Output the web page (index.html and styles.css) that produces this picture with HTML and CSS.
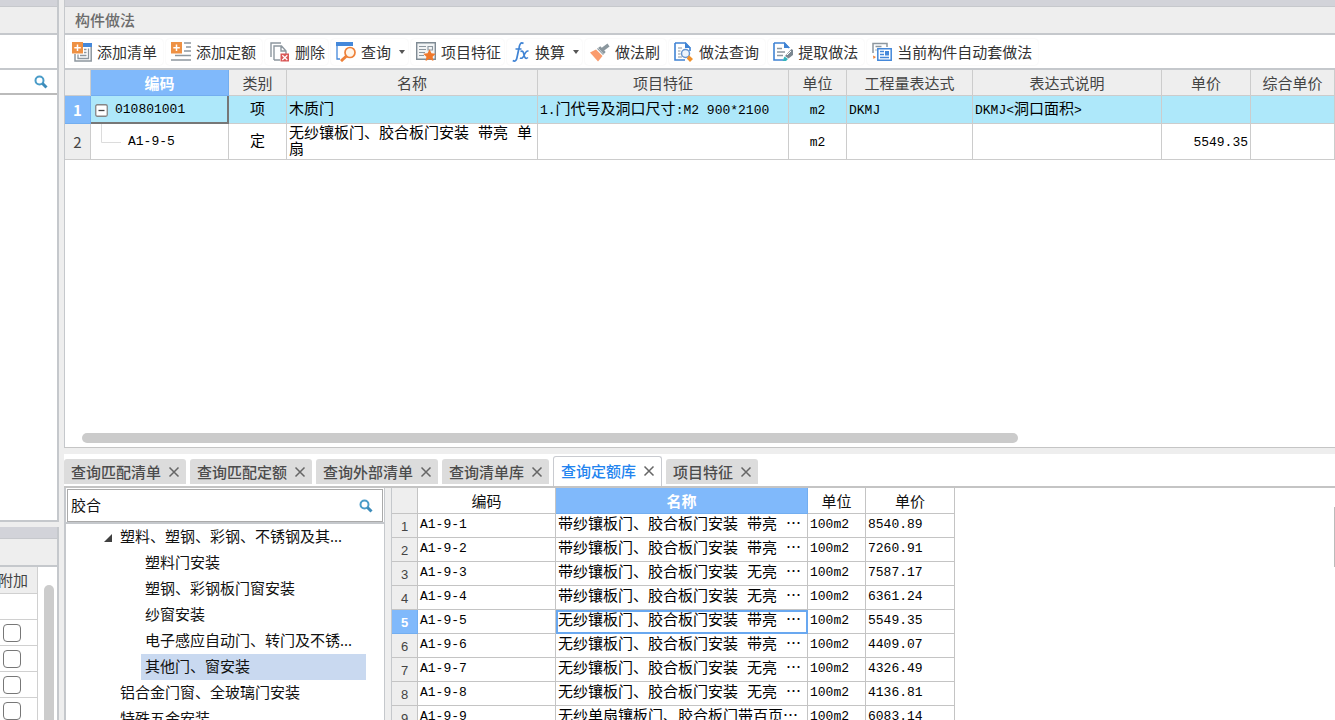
FILE: index.html
```html
<!DOCTYPE html>
<html lang="zh-CN">
<head>
<meta charset="utf-8">
<title>构件做法</title>
<link rel="stylesheet" href="styles.css">
</head>
<body>
<div class="app">
  <aside class="side">
    <section class="side-top">
      <div class="band"></div>
      <div class="caption"></div>
      <div class="side-tools"></div>
      <div class="side-search">
        <button class="icon-button" aria-label="搜索"><svg width="14" height="14" viewBox="0 0 14 14"><circle cx="5.5" cy="5.5" r="4" fill="none" stroke="#4a9cc8" stroke-width="2"/><path d="M8.5 8.5l4 4" stroke="#3d8cba" stroke-width="3"/></svg></button>
      </div>
      <div class="side-list"></div>
    </section>
    <section class="side-bottom">
      <div class="band tall"></div>
      <div class="caption"></div>
      <div class="extra">
        <table class="extra-table">
          <thead><tr><th>附加</th></tr></thead>
          <tbody>
            <tr><td></td></tr>
            <tr><td><input type="checkbox" aria-label="附加 1"></td></tr>
            <tr><td><input type="checkbox" aria-label="附加 2"></td></tr>
            <tr><td><input type="checkbox" aria-label="附加 3"></td></tr>
            <tr><td><input type="checkbox" aria-label="附加 4"></td></tr>
          </tbody>
        </table>
        <div class="side-thumb"></div>
      </div>
    </section>
  </aside>

  <main class="main">
    <section class="work">
      <div class="band"></div>
      <h1 class="caption title">构件做法</h1>
      <div class="toolbar">
        <button class="tool"><svg width="20" height="20" viewBox="0 0 20 20"><path d="M9 1h11v4H9z" fill="#4488da"/><path d="M19.200 5v14H3V12" fill="none" stroke="#8d979f" stroke-width="1.500"/><path d="M16.500 6.500v10H6v-4M12 7.500h2.500M12 10.500h2.500M8 13.500h6.500" fill="none" stroke="#8d979f" stroke-width="1.300"/><path d="M0 0h11v11.500H0z" fill="#ee9144"/><path d="M5.500 2.500v6.500M2.300 5.700h6.500" stroke="#fff" stroke-width="1.500"/></svg><span>添加清单</span></button>
        <button class="tool"><svg width="20" height="20" viewBox="0 0 20 20"><path d="M13 1h7M15 5h5M13 9h7M4 13.500h16M0 18h20" stroke="#8d979f" stroke-width="1.500"/><path d="M0 0h11v11.500H0z" fill="#ee9144"/><path d="M5.500 2.500v6.500M2.300 5.700h6.500" stroke="#fff" stroke-width="1.500"/></svg><span>添加定额</span></button>
        <button class="tool tight"><svg width="20" height="20" viewBox="0 0 20 20"><path d="M1 15V1h10M4 18V4h7.500l4.500 5v4M4 18h6M11 4v5h5" fill="none" stroke="#8d979f" stroke-width="1.400"/><path d="M10.500 11.500h8.500v8h-8.500z" fill="#d95757"/><path d="M12.300 13.200l5 4.800M17.300 13.200l-5 4.800" stroke="#fff" stroke-width="1.200"/></svg><span>删除</span></button>
        <button class="tool tight"><svg width="20" height="20" viewBox="0 0 20 20"><path d="M0 0h17v4H0z" fill="#4488da"/><path d="M1 3v14h3" fill="none" stroke="#4488da" stroke-width="1.300"/><circle cx="14" cy="10.500" r="5" fill="#fff5e9" stroke="#ee8139" stroke-width="1.700"/><path d="M10.500 14L5 19" stroke="#ee8139" stroke-width="3"/></svg><span>查询</span><i class="arrow"></i></button>
        <button class="tool tight"><svg width="20" height="20" viewBox="0 0 20 20"><path d="M.7.700h18.600v16.600H.7z" fill="#f2f4f5" stroke="#7f8b94" stroke-width="1.400"/><path d="M3 4.500h7M3 7.500h7M3 10.500h6M3 13.500h5M12 4.500h4.500v3.500H12z" fill="none" stroke="#8d979f" stroke-width="1.100"/><path d="M13.500 7.200l1.900 4 4.400.5-3.200 3.100.8 4.300-3.900-2.100-3.900 2.100.8-4.300-3.200-3.100 4.400-.5z" fill="#f0782b"/></svg><span>项目特征</span></button>
        <button class="tool tight"><svg width="18" height="20" viewBox="0 0 18 20"><path d="M11.500 1.500C8.500-.5 7.500 3 7 6L5 15.500C4.500 18.500 3 20 .8 18.500M3.500 7h6" fill="none" stroke="#3f83d4" stroke-width="1.700"/><path d="M8.500 9.500c2.500-1.500 3 1 3.500 3.500s1.500 4.500 4 2.500M16.500 9.200c-2-.8-3.500 2-4.500 4.300s-2.500 3.500-4 2.300" fill="none" stroke="#3f83d4" stroke-width="1.600"/></svg><span>换算</span><i class="arrow"></i></button>
        <button class="tool"><svg width="20" height="20" viewBox="0 0 20 20"><path d="M0 10.500l6-3 6.500 6.500-4.500 5.500z" fill="#fa9b6d"/><path d="M7 6.800l3.300-2.500 5.400 5.700-2.700 3z" fill="#8b979e"/><path d="M12.500 7.500L18.500 3" stroke="#8b979e" stroke-width="3.500"/><path d="M8 6l5.500 6" stroke="#c7cfd4"/></svg><span>做法刷</span></button>
        <button class="tool"><svg width="20" height="20" viewBox="0 0 20 20"><path d="M1 1h10.500L16 6v3M1 1v17h10" fill="none" stroke="#3f83d4" stroke-width="1.600"/><path d="M11 0l6 6h-6z" fill="#3f83d4"/><path d="M4 6h4M4 9h2.500M4 12h2.500M4 15h4" stroke="#8d979f" stroke-width="1.100"/><circle cx="11.500" cy="11.500" r="4" fill="#edf4fc" stroke="#6594cf" stroke-width="1.500"/><path d="M15 13.300l4 3.700-3 3-3.300-3.500z" fill="#f0912c"/></svg><span>做法查询</span></button>
        <button class="tool"><svg width="20" height="20" viewBox="0 0 20 20"><path d="M1 1h10.500L16 6M1 1v17h9" fill="none" stroke="#3f83d4" stroke-width="1.600"/><path d="M11 0l6 6h-6z" fill="#3f83d4"/><path d="M4 6.500h5M4 10h8M4 13.500h6" stroke="#8d979f" stroke-width="1.300"/><path d="M12 14l6.500-7 1.500 1v5l-4.500 3.500z" fill="#7b8790"/><path d="M14 13l4-4" stroke="#fff"/><path d="M9.500 19l2-4.500 3.500 2.500-2 2z" fill="#35b3bb"/></svg><span>提取做法</span></button>
        <button class="tool"><svg width="20" height="20" viewBox="0 0 20 20"><path d="M1 11V1.500h14V5M3.500 4.500h6M3.500 8h1" fill="none" stroke="#8d979f" stroke-width="1.500"/><path d="M1 13.500l3 1.500-2.500 2z" fill="#ee8139"/><path d="M5.800 6.800h13.400v11.400H5.800z" fill="#fff" stroke="#4488da" stroke-width="1.500"/><path d="M8 9.500h4M8 12.500h4M8 15.500h9" stroke="#4488da" stroke-width="1.300"/><path d="M13 9h4v4.500h-4z" fill="#4488da"/></svg><span>当前构件自动套做法</span></button>
      </div>
      <div class="grid-area">
        <table class="grid">
          <colgroup><col class="c-no"><col class="c-code"><col class="c-type"><col class="c-name"><col class="c-name"><col class="c-unit"><col class="c-expr"><col class="c-desc"><col class="c-price"><col></colgroup>
          <thead><tr><th></th><th class="picked">编码</th><th>类别</th><th>名称</th><th>项目特征</th><th>单位</th><th>工程量表达式</th><th>表达式说明</th><th>单价</th><th>综合单价</th></tr></thead>
          <tbody>
            <tr class="current">
              <th class="picked">1</th>
              <td class="focus"><div class="node"><button class="collapse" aria-label="折叠"><svg width="13" height="13" viewBox="0 0 13 13"><rect x=".75" y=".75" width="11.500" height="11.500" rx="1.500" fill="#fff" stroke="#858585" stroke-width="1.300"/><path d="M3.500 6.500h6" stroke="#444" stroke-width="1.300"/></svg></button><span class="num">010801001</span></div></td>
              <td class="center">项</td><td>木质门</td>
              <td><span class="num">1.</span>门代号及洞口尺寸<span class="num">:M2 900*2100</span></td>
              <td class="center num">m2</td><td class="num">DKMJ</td>
              <td><span class="num">DKMJ&lt;</span>洞口面积<span class="num">&gt;</span></td><td></td><td></td>
            </tr>
            <tr class="second">
              <th>2</th>
              <td><div class="node child"><svg width="20" height="36" viewBox="0 0 20 36"><path d="M.5 0v18.500H20" fill="none" stroke="#dcdcdc"/></svg><span class="num">A1-9-5</span></div></td>
              <td class="center">定</td><td class="wrap">无纱镶板门、胶合板门安装 带亮 单扇</td>
              <td></td><td class="center num">m2</td><td></td><td></td><td class="right num">5549.35</td><td></td>
            </tr>
          </tbody>
        </table>
        <div class="h-thumb"></div>
      </div>
    </section>

    <nav class="tabs">
      <div class="tab"><button>查询匹配清单</button><button class="close" aria-label="关闭"><svg width="12" height="12" viewBox="0 0 12 12"><path d="M1.500 1.500l9 9M10.500 1.500l-9 9"/></svg></button></div>
      <div class="tab"><button>查询匹配定额</button><button class="close" aria-label="关闭"><svg width="12" height="12" viewBox="0 0 12 12"><path d="M1.500 1.500l9 9M10.500 1.500l-9 9"/></svg></button></div>
      <div class="tab"><button>查询外部清单</button><button class="close" aria-label="关闭"><svg width="12" height="12" viewBox="0 0 12 12"><path d="M1.500 1.500l9 9M10.500 1.500l-9 9"/></svg></button></div>
      <div class="tab"><button>查询清单库</button><button class="close" aria-label="关闭"><svg width="12" height="12" viewBox="0 0 12 12"><path d="M1.500 1.500l9 9M10.500 1.500l-9 9"/></svg></button></div>
      <div class="tab active"><button>查询定额库</button><button class="close" aria-label="关闭"><svg width="12" height="12" viewBox="0 0 12 12"><path d="M1.500 1.500l9 9M10.500 1.500l-9 9"/></svg></button></div>
      <div class="tab"><button>项目特征</button><button class="close" aria-label="关闭"><svg width="12" height="12" viewBox="0 0 12 12"><path d="M1.500 1.500l9 9M10.500 1.500l-9 9"/></svg></button></div>
    </nav>

    <section class="query">
      <div class="tree-pane">
        <div class="search">
          <input type="text" value="胶合" aria-label="搜索定额">
          <button class="icon-button" aria-label="搜索"><svg width="14" height="14" viewBox="0 0 14 14"><circle cx="5.500" cy="5.500" r="4" fill="none" stroke="#4a9cc8" stroke-width="2"/><path d="M8.500 8.500l4 4" stroke="#3d8cba" stroke-width="3"/></svg></button>
        </div>
        <ul class="tree">
          <li class="parent"><svg width="8" height="8" viewBox="0 0 8 8"><path d="M8 0v8H0z" fill="#404040"/></svg>塑料、塑钢、彩钢、不锈钢及其<span class="dots">...</span></li>
          <li class="leaf">塑料门安装</li>
          <li class="leaf">塑钢、彩钢板门窗安装</li>
          <li class="leaf">纱窗安装</li>
          <li class="leaf">电子感应自动门、转门及不锈<span class="dots">...</span></li>
          <li class="leaf selected">其他门、窗安装</li>
          <li>铝合金门窗、全玻璃门安装</li>
          <li>特殊五金安装</li>
        </ul>
      </div>
      <div class="result">
        <table class="rates">
          <colgroup><col class="c-no"><col class="c-code"><col class="c-rate-name"><col class="c-unit"><col class="c-price"></colgroup>
          <thead><tr><th class="corner"></th><th>编码</th><th class="picked">名称</th><th>单位</th><th>单价</th></tr></thead>
          <tbody>
            <tr><th>1</th><td class="num">A1-9-1</td><td>带纱镶板门、胶合板门安装 带亮 <span class="more">…</span></td><td class="num">100m2</td><td class="num">8540.89</td></tr>
            <tr><th>2</th><td class="num">A1-9-2</td><td>带纱镶板门、胶合板门安装 带亮 <span class="more">…</span></td><td class="num">100m2</td><td class="num">7260.91</td></tr>
            <tr><th>3</th><td class="num">A1-9-3</td><td>带纱镶板门、胶合板门安装 无亮 <span class="more">…</span></td><td class="num">100m2</td><td class="num">7587.17</td></tr>
            <tr><th>4</th><td class="num">A1-9-4</td><td>带纱镶板门、胶合板门安装 无亮 <span class="more">…</span></td><td class="num">100m2</td><td class="num">6361.24</td></tr>
            <tr><th class="picked">5</th><td class="num">A1-9-5</td><td class="outlined">无纱镶板门、胶合板门安装 带亮 <span class="more">…</span></td><td class="num">100m2</td><td class="num">5549.35</td></tr>
            <tr><th>6</th><td class="num">A1-9-6</td><td>无纱镶板门、胶合板门安装 带亮 <span class="more">…</span></td><td class="num">100m2</td><td class="num">4409.07</td></tr>
            <tr><th>7</th><td class="num">A1-9-7</td><td>无纱镶板门、胶合板门安装 无亮 <span class="more">…</span></td><td class="num">100m2</td><td class="num">4326.49</td></tr>
            <tr><th>8</th><td class="num">A1-9-8</td><td>无纱镶板门、胶合板门安装 无亮 <span class="more">…</span></td><td class="num">100m2</td><td class="num">4136.81</td></tr>
            <tr><th>9</th><td class="num">A1-9-9</td><td>无纱单扇镶板门、胶合板门带百页<span class="more">…</span></td><td class="num">100m2</td><td class="num">6083.14</td></tr>
          </tbody>
        </table>
        <div class="v-thumb"></div>
      </div>
    </section>
  </main>
</div>
</body>
</html>
```

FILE: styles.css
```css
* { box-sizing: border-box; }

body {
  margin: 0;
  background: #eee;
  color: #111;
  font: 15px/20px "Noto Sans CJK SC", sans-serif;
}

button {
  margin: 0;
  padding: 0;
  border: 0;
  background: none;
  color: inherit;
  font: inherit;
}

svg { display: block; flex: none; }

.app {
  display: grid;
  grid-template-columns: 59px minmax(0, 1fr);
  column-gap: 5px;
  height: 100vh;
  overflow: hidden;
}

.band { flex: none; height: 7px; background: #d2d3d9; border-bottom: 1px solid #c6c8cc; }
.band.tall { height: 12px; }

.caption {
  flex: none;
  height: 28px;
  margin: 0;
  background: #eee;
  border-bottom: 2px solid #c5c8cc;
}

.title {
  padding: 3px 10px;
  color: #6c6c6c;
  font-size: 15px;
  font-weight: 500;
}

/* left column */
.side { display: flex; flex-direction: column; min-height: 0; }
.side-top {
  display: flex;
  flex: none;
  flex-direction: column;
  height: 522px;
  border-right: 2px solid #c5c8cc;
  border-bottom: 2px solid #c5c8cc;
}
.side-tools { height: 35px; background: #fff; border-bottom: 2px solid #c5c8cc; }
.side-search {
  display: flex;
  align-items: center;
  justify-content: flex-end;
  height: 25px;
  padding-right: 9px;
  background: #fff;
  border-bottom: 2px solid #bbb;
}
.side-list { flex: 1; background: #fff; }
.side-bottom {
  display: flex;
  flex: 1;
  flex-direction: column;
  min-height: 0;
  margin-top: 5px;
  border-right: 2px solid #c5c8cc;
}
.extra { display: flex; flex: 1; min-height: 0; overflow: hidden; background: #fff; }
.extra-table { flex: none; width: 38px; border-spacing: 0; table-layout: fixed; align-self: flex-start; }
.extra-table th {
  height: 27px;
  padding: 0 10px 0 0;
  background: #eee;
  border: solid #d0d0d0;
  border-width: 0 1px 1px 0;
  color: #444;
  font-weight: 400;
  direction: rtl;
  text-align: right;
  white-space: nowrap;
}
.extra-table td { height: 26px; padding: 0 0 0 3px; border: solid #d0d0d0; border-width: 0 1px 1px 0; }
.extra-table input {
  display: block;
  appearance: none;
  width: 18px;
  height: 18px;
  margin: 0;
  background: #fff;
  border: 1px solid #777;
  border-radius: 4px;
}
.side-thumb { width: 10px; margin: 18px 0 0 6px; background: #ccc; border-radius: 5px 5px 0 0; }

/* main column */
.main { display: flex; flex-direction: column; min-width: 0; min-height: 0; }
.work {
  display: flex;
  flex: none;
  flex-direction: column;
  height: 448px;
  border-left: 1px solid #c5c8cc;
  border-bottom: 1px solid #c5c5c5;
}

.toolbar {
  display: flex;
  flex: none;
  align-items: center;
  gap: 3px;
  height: 35px;
  padding-left: 2px;
  background: #fff;
  border-bottom: 2px solid #c5c8cc;
}
.tool {
  display: flex;
  flex: none;
  align-items: center;
  gap: 5px;
  height: 26px;
  padding: 0 6px 0 5px;
  border-radius: 4px;
  box-shadow: 0 0 2px #eee;
  color: #333;
  white-space: nowrap;
}
.tool.tight { padding-right: 3px; }
.arrow {
  margin-left: 3px;
  border: solid transparent;
  border-width: 4px 3px 0;
  border-top-color: #555;
}

.grid-area { display: flex; flex: 1; flex-direction: column; justify-content: space-between; background: #fff; }
.h-thumb { width: calc(74% - 4px); height: 10px; margin: 0 0 4px 17px; background: #cbcbcb; border-radius: 5px; }

table { line-height: 16px; }
.grid, .rates { border-spacing: 0; table-layout: fixed; }
.grid { width: 100%; }
.c-no { width: 26px; }
.c-code { width: 138px; }
.c-type { width: 58px; }
.c-name { width: 251px; }
.c-rate-name { width: 252px; }
.c-unit { width: 58px; }
.c-expr { width: 126px; }
.c-desc { width: 189px; }
.c-price { width: 89px; }

.grid th, .grid td, .rates th, .rates td {
  padding: 0 2px;
  border: solid #ccc;
  border-width: 0 1px 1px 0;
  font-weight: 400;
  white-space: nowrap;
}
.grid td, .rates td { font-family: "Liberation Mono", "Noto Sans CJK SC", monospace; text-align: left; color: #000; }
.grid th { height: 26px; background: #eee; color: #444; }
.grid td { padding-top: 2px; }
.grid .current td { height: 28px; background: #aee8fa; }
.grid .second td { height: 36px; }
.grid td.wrap { white-space: normal; word-break: break-all; }
.grid td.center { text-align: center; }
.grid td.right { text-align: right; }
.grid th.picked, .rates th.picked { background: #80b9fb; border-color: #73aef0; color: #fff; font-weight: 700; }
.grid td.focus { border-color: #777; border-width: 0 2px 2px 0; }
.grid .num, .rates .num { font-family: "Liberation Mono", monospace; font-size: 13px; }
.node { display: flex; align-items: center; gap: 7px; padding-left: 2px; }
.collapse { flex: none; }
.node.child { height: 35px; margin-top: -2px; overflow: hidden; padding-left: 8px; }

/* query tabs */
.tabs {
  display: flex;
  flex: none;
  align-items: flex-end;
  gap: 4px;
  height: 40px;
  border-top: 6px solid #eee;
  border-bottom: 2px solid #c4c4c4;
  background: #fff;
}
.tab {
  display: flex;
  flex: none;
  align-items: center;
  gap: 7px;
  height: 25px;
  margin-bottom: 2px;
  padding: 0 6px 0 7px;
  background: #dcdcdc;
  border-radius: 3px 3px 0 0;
  color: #4c4c4c;
  font-weight: 500;
  white-space: nowrap;
}
.tab.active {
  height: 30px;
  margin-bottom: 0;
  padding: 0 6px 2px 7px;
  background: #fff;
  border: 1px solid #c9cbd0;
  border-bottom: 0;
  color: #2384ef;
}
.close svg { fill: none; stroke: #666; stroke-width: 1.5; }

.query {
  display: grid;
  flex: 1;
  grid-template-columns: 321px minmax(0, 1fr);
  column-gap: 6px;
  min-height: 0;
}
.tree-pane {
  display: flex;
  flex-direction: column;
  min-height: 0;
  background: #fff;
  border: solid #c5c8cc;
  border-width: 0 1px 0 2px;
  overflow: hidden;
}
.search {
  display: flex;
  flex: none;
  align-items: center;
  height: 33px;
  margin: 1px 1px 0;
  padding: 0 9px 0 3px;
  border: 1px solid #aaa;
}
.search input {
  flex: 1;
  min-width: 0;
  height: 24px;
  padding: 0 0 2px;
  border: 0;
  outline: 0;
  background: none;
  color: #111;
  font: inherit;
}
.tree { margin: 0; padding: 0; border-top: 2px solid #c5c8cc; list-style: none; }
.tree li { height: 26px; padding-left: 54px; line-height: 24px; white-space: nowrap; }
.tree .parent { display: flex; align-items: flex-start; gap: 8px; padding-left: 38px; }
.tree .parent svg { margin-top: 10px; }
.tree .parent .dots { margin-left: -8px; }
.tree .leaf { margin: 0 18px 0 75px; padding-left: 4px; }
.tree .selected { background: #c9d9f0; }
.dots { font-family: "Noto Sans", sans-serif; }

.result {
  display: flex;
  align-items: flex-start;
  justify-content: space-between;
  min-width: 0;
  overflow: hidden;
  background: #fff;
  border-left: 1px solid #c5c8cc;
}
.rates { flex: none; width: 563px; }
.rates th { height: 24px; background: #eee; border-color: #c4c4c4; color: #444; }
.rates thead th { height: 26px; background: #fff; color: #111; }
.rates thead th.corner { background: #eee; }
.rates tbody th { padding-top: 2px; font-family: "Liberation Sans", sans-serif; font-size: 13px; }
.rates td { height: 24px; border-color: #c4c4c4; padding-bottom: 2px; }
.rates td.outlined { outline: 2px solid #69a8f0; outline-offset: -2px; }
.more { font-family: "Noto Sans CJK SC", sans-serif; }
.v-thumb { width: 1px; height: 60px; margin-top: 19px; background: #bbb; }
```
